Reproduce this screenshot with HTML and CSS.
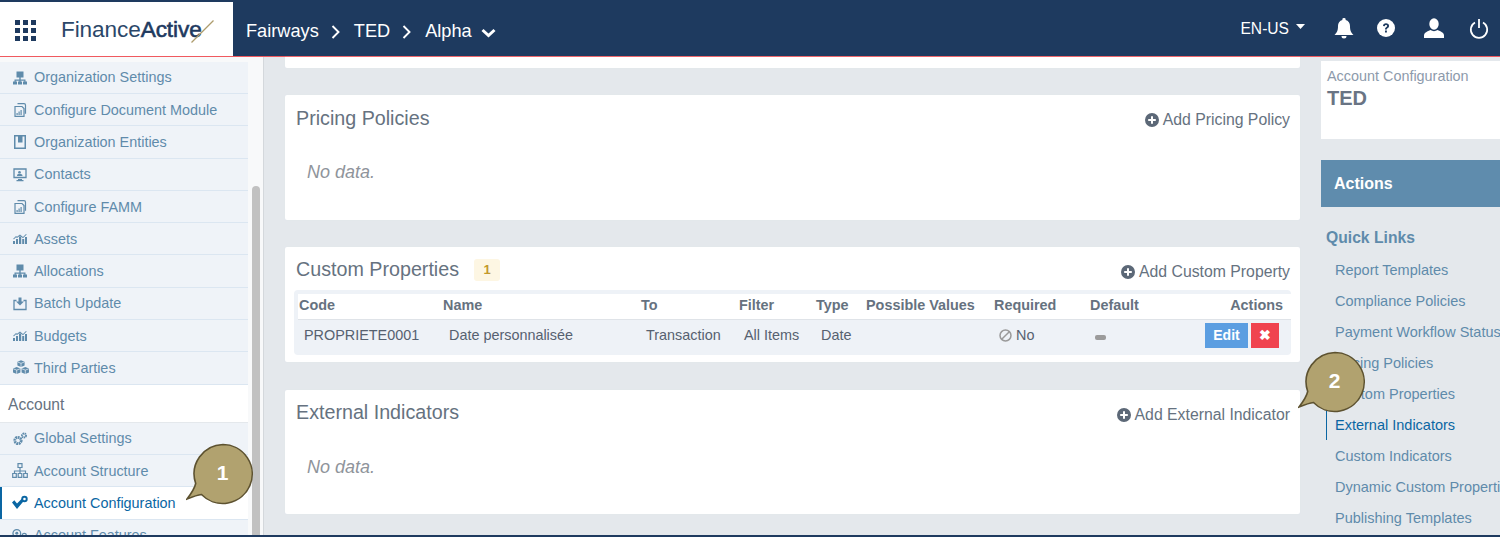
FILE: index.html
```html
<!DOCTYPE html>
<html lang="en">
<head>
<meta charset="utf-8">
<title>Account Configuration</title>
<link rel="stylesheet" href="styles.css">
</head>
<body>
<svg class="defs" width="0" height="0" aria-hidden="true">
  <symbol id="i-org" viewBox="0 0 14 13"><path d="M3.500 0h7v6h-7zM6.300 6h1.400v2h4.800v2h1.500v3H10v-3h1.300V9.200H7.700V10H9v3H5v-3h1.300v-.8H2.700V10H4v3H0v-3h1.500V8h4.800z" fill="currentColor"/></symbol>
  <symbol id="i-doc" viewBox="0 0 13 14"><path d="M4 .7h6.500a1.500 1.500 0 0 1 1.500 1.500v8.600M1.500 3.500h7l2 2v7.800h-9z" fill="none" stroke="currentColor" stroke-width="1.200"/><path d="M3 10h1.200v2H3zM5 8.500h1.200V12H5zM7 7h1.200v5H7z" fill="currentColor"/></symbol>
  <symbol id="i-book" viewBox="0 0 12 14"><path fill-rule="evenodd" d="M0 0h12v14H0zM1.500 1.500v11h9v-11H8.500v6H4v-6z" fill="currentColor"/></symbol>
  <symbol id="i-screen" viewBox="0 0 14 14"><path d="M1 1h12v8.500H1z" fill="none" stroke="currentColor" stroke-width="1.300"/><path d="M5 11h4v1h1.500v1.200h-7V12H5z" fill="currentColor"/><circle cx="6.500" cy="4.300" r="1.300" fill="currentColor"/><path d="M4 8c0-2 1-2.300 2.500-2.300S9.500 6 9.500 8z" fill="currentColor"/></symbol>
  <symbol id="i-chart" viewBox="0 0 14 10"><path d="M0 7h2v3H0zM3 5h2v5H3zM6 2.500h2.200V10H6zM9.200 5h2v5h-2zM12 3h2v7h-2zM0 5l3-3 1 .8 3-2.300 3 2.500 3-3 .7.600-3.700 3.700-3-2.500-3 2.300-1-.8-2 2z" fill="currentColor"/></symbol>
  <symbol id="i-batch" viewBox="0 0 14 13"><path d="M3.500 3H1v9h12V3h-2.500" fill="none" stroke="currentColor" stroke-width="1.300"/><path d="M5.500 0h3v4H11L7 8 3 4h2.500z" fill="currentColor"/></symbol>
  <symbol id="i-cubes" viewBox="0 0 18 15"><path d="M9 .3l3.600 1.400v3.900L9 7 5.400 5.600V1.700zM4.700 7l3.700 1.400v4.100l-3.700 1.500L1 12.500V8.400zM13.300 7L17 8.400v4.100L13.300 14l-3.700-1.500V8.400z" fill="currentColor"/><path d="M5.600 2L9 3.300 12.400 2M9 3.300V7M1.200 8.800l3.500 1.300 3.500-1.300M4.700 10.100V14M9.800 8.800l3.500 1.300 3.500-1.300M13.300 10.100V14" fill="none" stroke="#eff3f8" stroke-width=".7"/></symbol>
  <symbol id="i-gears" viewBox="0 0 14 13"><circle cx="5" cy="8" r="3.200" fill="none" stroke="currentColor" stroke-width="2.800" stroke-dasharray="1.800 .6"/><circle cx="11" cy="3" r="2" fill="none" stroke="currentColor" stroke-width="2" stroke-dasharray="1.300 .5"/></symbol>
  <symbol id="i-tree" viewBox="0 0 16 15"><path d="M8 4.500v3.500M2.500 10.500V8h11v2.500M8 8v2.500" fill="none" stroke="currentColor" stroke-width="1.200"/><path d="M6 .7h4v3.800H6zM.7 10.500h3.600v3.800H.7zM6.200 10.500h3.600v3.800H6.200zM11.700 10.500h3.600v3.800h-3.600z" fill="none" stroke="currentColor" stroke-width="1.200"/></symbol>
  <symbol id="i-config" viewBox="0 0 15 13"><path d="M0 6.500l2.200-2 2.500 3L11 1l1.800 2-8.100 9.500z" fill="currentColor"/><circle cx="11.700" cy="3.200" r="3" fill="currentColor"/><circle cx="11.700" cy="3.200" r="1.200" fill="#fff"/></symbol>
  <symbol id="i-feat" viewBox="0 0 15 13"><circle cx="4.500" cy="4.500" r="3.600" fill="none" stroke="currentColor" stroke-width="1.200"/><circle cx="4.500" cy="4.500" r="1.400" fill="currentColor"/><circle cx="11.500" cy="6.500" r="2" fill="none" stroke="currentColor" stroke-width="1.200"/><path d="M1 11h13" stroke="currentColor" stroke-width="1.200"/></symbol>
  <symbol id="i-plus" viewBox="0 0 14 14"><path fill-rule="evenodd" d="M7 0a7 7 0 1 1 0 14A7 7 0 0 1 7 0zM6 3.200V6H3.200v2H6v2.800h2V8h2.800V6H8V3.200z" fill="currentColor"/></symbol>
</svg>

<div class="page">
  <header class="topbar">
    <div class="brand">
      <svg class="apps" viewBox="0 0 21 21" aria-hidden="true"><path d="M0 0h5v5H0zM8 0h5v5H8zM16 0h5v5h-5zM0 8h5v5H0zM8 8h5v5H8zM16 8h5v5h-5zM0 16h5v5H0zM8 16h5v5H8zM16 16h5v5h-5z" fill="#1e3a5f"/></svg>
      <span class="logo">Finance<b>Active</b></span>
      <svg class="slash" viewBox="0 0 23 23" aria-hidden="true"><path d="M.5 22.500L22.500.5" stroke="#ad9c6c" stroke-width="1.300" fill="none"/></svg>
    </div>
    <nav class="crumbs">
      <span>Fairways</span>
      <svg class="chev" viewBox="0 0 10 14" aria-hidden="true"><path d="M1.500 1l6 6-6 6" fill="none" stroke="#fff" stroke-width="1.900"/></svg>
      <span>TED</span>
      <svg class="chev" viewBox="0 0 10 14" aria-hidden="true"><path d="M1.500 1l6 6-6 6" fill="none" stroke="#fff" stroke-width="1.900"/></svg>
      <span>Alpha</span>
      <svg class="down" viewBox="0 0 15 10" aria-hidden="true"><path d="M1.500 2l6 5.500 6-5.500" fill="none" stroke="#fff" stroke-width="3"/></svg>
    </nav>
    <div class="tools">
      <span class="lang">EN-US</span>
      <svg class="caret" viewBox="0 0 9 5" aria-hidden="true"><path d="M0 0h9L4.500 5z" fill="#fff"/></svg>
      <svg class="tool t-bell" viewBox="0 0 20 21" aria-hidden="true"><path d="M10 0a1.600 1.600 0 0 1 1.600 1.900C14.500 2.700 16 5 16 8c0 5 1.300 6.700 3.500 9h-19C2.700 14.700 4 13 4 8c0-3 1.500-5.300 4.400-6.100A1.600 1.600 0 0 1 10 0zM7.500 18h5a2.500 2.500 0 0 1-5 0z" fill="#fff"/></svg>
      <svg class="tool t-help" viewBox="0 0 18 18" aria-hidden="true"><circle cx="9" cy="9" r="9" fill="#fff"/><path d="M6 7c0-1.700 1.300-2.700 3-2.700S12.100 5.300 12.100 7c0 2-2.300 2-2.300 3.500H8c0-2.400 2.100-2.400 2.100-3.500 0-.6-.5-1-1.100-1s-1.100.4-1.200 1.200z" fill="#1e3a5f"/><path d="M8 11.500h1.900v1.900H8z" fill="#1e3a5f"/></svg>
      <svg class="tool t-user" viewBox="0 0 20 20" aria-hidden="true"><ellipse cx="10" cy="6" rx="4.700" ry="5.700" fill="#fff"/><path d="M0 17.500c0-3 3.500-4 6.500-5.500 2 1.500 5 1.500 7 0 3 1.500 6.500 2.500 6.500 5.500V20H0z" fill="#fff"/></svg>
      <svg class="tool t-power" viewBox="0 0 20 21" aria-hidden="true"><path d="M6 4.500a8.200 8.200 0 1 0 8 0" fill="none" stroke="#fff" stroke-width="1.700"/><path d="M10 1v9" stroke="#fff" stroke-width="1.800"/></svg>
    </div>
  </header>

  <div class="body">
    <aside class="side">
      <ul class="menu">
        <li><svg class="mi"><use href="#i-org"/></svg>Organization Settings</li>
        <li><svg class="mi"><use href="#i-doc"/></svg>Configure Document Module</li>
        <li><svg class="mi"><use href="#i-book"/></svg>Organization Entities</li>
        <li><svg class="mi"><use href="#i-screen"/></svg>Contacts</li>
        <li><svg class="mi"><use href="#i-doc"/></svg>Configure FAMM</li>
        <li><svg class="mi"><use href="#i-chart"/></svg>Assets</li>
        <li><svg class="mi"><use href="#i-org"/></svg>Allocations</li>
        <li><svg class="mi"><use href="#i-batch"/></svg>Batch Update</li>
        <li><svg class="mi"><use href="#i-chart"/></svg>Budgets</li>
        <li><svg class="mi cubes"><use href="#i-cubes"/></svg>Third Parties</li>
        <li class="group">Account</li>
        <li><svg class="mi"><use href="#i-gears"/></svg>Global Settings</li>
        <li><svg class="mi tree"><use href="#i-tree"/></svg>Account Structure</li>
        <li class="active"><svg class="mi tree"><use href="#i-config"/></svg>Account Configuration</li>
        <li><svg class="mi tree"><use href="#i-feat"/></svg>Account Features</li>
      </ul>
      <div class="scroll"><div class="thumb"></div></div>
    </aside>

    <main class="content">
      <section class="panel stub"></section>

      <section class="panel empty">
        <div class="panel-head">
          <h2>Pricing Policies</h2>
          <a class="add"><svg class="plus"><use href="#i-plus"/></svg>Add Pricing Policy</a>
        </div>
        <p class="nodata">No data.</p>
      </section>

      <section class="panel props">
        <div class="panel-head">
          <h2>Custom Properties</h2><span class="count">1</span>
          <a class="add"><svg class="plus"><use href="#i-plus"/></svg>Add Custom Property</a>
        </div>
        <div class="table-wrap">
          <table>
            <colgroup>
              <col class="c1"><col class="c2"><col class="c3"><col class="c4"><col class="c5"><col class="c6"><col class="c7"><col class="c8"><col>
            </colgroup>
            <thead>
              <tr><th>Code</th><th>Name</th><th>To</th><th>Filter</th><th>Type</th><th>Possible Values</th><th>Required</th><th>Default</th><th class="right">Actions</th></tr>
            </thead>
            <tbody>
              <tr>
                <td>PROPRIETE0001</td><td>Date personnalisée</td><td>Transaction</td><td>All Items</td><td>Date</td><td></td>
                <td><svg class="ban" viewBox="0 0 13 13" aria-hidden="true"><circle cx="6.500" cy="6.500" r="5.500" fill="none" stroke="#9a9a9a" stroke-width="1.500"/><path d="M2.700 10.300l7.600-7.600" stroke="#9a9a9a" stroke-width="1.500"/></svg>No</td>
                <td><span class="dash"></span></td>
                <td class="right acts"><span class="btn edit">Edit</span><span class="btn del">✖</span></td>
              </tr>
            </tbody>
          </table>
        </div>
      </section>

      <section class="panel empty">
        <div class="panel-head">
          <h2>External Indicators</h2>
          <a class="add"><svg class="plus"><use href="#i-plus"/></svg>Add External Indicator</a>
        </div>
        <p class="nodata">No data.</p>
      </section>
    </main>

    <aside class="rail">
      <div class="acct">
        <div class="acct-label">Account Configuration</div>
        <div class="acct-name">TED</div>
      </div>
      <div class="actions">Actions</div>
      <div class="quick">Quick Links</div>
      <ul class="links">
        <li>Report Templates</li>
        <li>Compliance Policies</li>
        <li>Payment Workflow Status</li>
        <li>Pricing Policies</li>
        <li>Custom Properties</li>
        <li class="current">External Indicators</li>
        <li>Custom Indicators</li>
        <li>Dynamic Custom Properties</li>
        <li>Publishing Templates</li>
      </ul>
    </aside>
  </div>

  <div class="callout one">
    <svg viewBox="0 0 70 66" aria-hidden="true"><path d="M37 1.500a29.500 29.500 0 1 1-21.500 50C11 52 6 54 1 56c3.500-4.500 7.500-10 8.700-15.500A29.500 29.500 0 0 1 37 1.500z" fill="#b1a26f" stroke="#5d5230" stroke-width="1.600"/></svg>
    <span>1</span>
  </div>
  <div class="callout two">
    <svg viewBox="0 0 70 66" aria-hidden="true"><path d="M37 1.500a29.500 29.500 0 1 1-21.500 50C11 52 6 54 1 56c3.500-4.500 7.500-10 8.700-15.500A29.500 29.500 0 0 1 37 1.500z" fill="#b1a26f" stroke="#5d5230" stroke-width="1.600"/></svg>
    <span>2</span>
  </div>
</div>
</body>
</html>
```

FILE: styles.css
```css
* { box-sizing: border-box; }
html, body { margin: 0; padding: 0; }
body {
  font-family: "Liberation Sans", Arial, sans-serif;
  color: #667280;
  background: #e4e8ec;
  overflow: hidden;
}
ul { list-style: none; margin: 0; padding: 0; }
.defs { display: block; height: 0; }

.page {
  position: relative;
  width: 1500px;
  height: 537px;
  display: flex;
  flex-direction: column;
  overflow: hidden;
  border-top: 2px solid #1e3a5f;
  border-bottom: 2px solid #1e3a5f;
}

.topbar {
  flex: none;
  height: 55px;
  display: flex;
  align-items: center;
  background: #1e3a5f;
  border-bottom: 1px solid #f0595f;
  color: #fff;
}
.brand {
  width: 233px;
  height: 100%;
  flex: none;
  display: flex;
  align-items: center;
  background: #fff;
  padding: 2px 0 0 15px;
}
.apps { width: 21px; height: 21px; flex: none; margin-right: 25px; }
.logo { font-size: 22.600px; color: #2b4769; letter-spacing: -.1px; }
.logo b { font-weight: 400; color: #1e3a5f; -webkit-text-stroke: .6px #1e3a5f; }
.slash { width: 23px; height: 23px; flex: none; margin: 3px 0 0 -11px; }

.crumbs { display: flex; align-items: center; font-size: 18.200px; padding: 4px 0 0 13px; }
.chev { width: 10px; height: 14px; margin: 1px 13px 0 12px; }
.down { width: 15px; height: 10px; margin: 3px 0 0 9px; }

.tools { margin-left: auto; display: flex; align-items: center; height: 100%; padding-bottom: 2px; }
.lang { font-size: 15.600px; margin-top: 1px; }
.caret { width: 9px; height: 5px; margin: -4px 0 0 7px; }
.tool { flex: none; }
.t-bell { width: 20px; height: 21px; margin-left: 29px; }
.t-help { width: 18px; height: 18px; margin-left: 23px; }
.t-user { width: 20px; height: 20px; margin-left: 29px; }
.t-power { width: 20px; height: 21px; margin: 0 11px 0 25px; }

.body { flex: 1; min-height: 0; display: flex; }

.side {
  width: 264px;
  flex: none;
  display: flex;
  background: #f8f9fa;
  border-right: 1px solid #d4d8dc;
  padding-top: 4.700px;
  overflow: hidden;
}
.menu { width: 248px; flex: none; }
.menu li {
  height: 32.300px;
  display: flex;
  align-items: center;
  background: #eff3f8;
  border-bottom: 1px solid #dbe6f1;
  color: #5f8bab;
  font-size: 14.400px;
  padding-left: 34px;
  position: relative;
  white-space: nowrap;
}
.mi { position: absolute; left: 13px; top: 9px; width: 14px; height: 14px; }
.mi.tree { left: 12px; top: 8px; width: 16px; height: 15px; }
.mi.cubes { left: 12px; top: 8px; width: 18px; height: 15px; }
.menu .group {
  height: 38px;
  background: #fff;
  color: #667280;
  font-size: 15.600px;
  padding: 3px 0 0 8px;
  border-bottom: 1px solid #e4e8ec;
}
.menu .active {
  background: #fff;
  color: #0a66a3;
  box-shadow: inset 2px 0 0 #0a66a3;
}
.scroll { width: 16px; padding: 124px 4px 0; flex: none; }
.thumb { width: 8px; height: 400px; background: #c1c1c1; border-radius: 4px 4px 0 0; }

.content { width: 1036px; flex: none; padding-left: 21px; display: flex; flex-direction: column; gap: 27.500px; }
.panel { background: #fff; width: 1015px; flex: none; border-radius: 2px; box-shadow: 0 0 1px #dbe3ec; }
.stub { height: 10.500px; border-radius: 0 0 2px 2px; }
.empty { height: 124.500px; }
.props { height: 115px; }
.panel-head { display: flex; align-items: center; padding: 5px 10px 0 11px; height: 41px; }
.panel-head h2 { margin: 0; font-size: 19.700px; font-weight: 400; color: #667280; }
.add { margin-left: auto; display: flex; align-items: center; font-size: 15.800px; color: #667280; padding-top: 4px; }
.plus { width: 14px; height: 14px; margin-right: 4px; color: #5c6877; }
.nodata { margin: 26px 0 0 22px; font-size: 18px; font-style: italic; color: #8f949b; }

.count {
  margin-left: 15px;
  width: 26px;
  height: 22px;
  display: flex;
  align-items: center;
  justify-content: center;
  background: #fdf6e3;
  border-radius: 3px;
  color: #c2992d;
  font-size: 13px;
  font-weight: 700;
}
.props .panel-head { padding-top: 2px; height: 43px; }

.table-wrap {
  margin-left: 9px;
  width: 997px;
  height: 65px;
  background: #eef2f7;
  border-radius: 4px;
  padding: 4px 0 0 4px;
}
table { width: 993px; border-collapse: collapse; table-layout: fixed; }
.c1 { width: 144px; } .c2 { width: 198px; } .c3 { width: 98px; } .c4 { width: 77px; }
.c5 { width: 50px; } .c6 { width: 128px; } .c7 { width: 96px; } .c8 { width: 90px; }
th {
  height: 25px;
  background: #fff;
  border-bottom: 1px solid #dfe3e8;
  text-align: left;
  font-size: 14.400px;
  font-weight: 700;
  color: #667280;
  padding: 0 0 2px 1px;
  white-space: nowrap;
}
td {
  height: 31px;
  font-size: 14.400px;
  color: #566170;
  padding: 1px 0 0 6px;
  white-space: nowrap;
}
td:nth-child(2) { padding-left: 7px; }
th.right { text-align: right; padding: 0 8px 2px 0; }
td.right { text-align: right; padding: 1px 4px 0 0; }
td.acts { padding-right: 12px; }
.ban { width: 13px; height: 13px; margin-right: 4px; vertical-align: -2px; }
.dash { display: inline-block; width: 11px; height: 5px; background: #9b9b9b; border-radius: 2px; vertical-align: 0; }
.btn {
  display: inline-block;
  height: 25px;
  line-height: 25px;
  text-align: center;
  color: #fff;
  font-weight: 700;
  font-size: 14px;
  vertical-align: middle;
}
.edit { width: 43px; background: #5b9ee1; }
.del { width: 28px; margin-left: 3px; background: #f0434f; font-size: 14px; }

.rail { flex: 1; padding-left: 21px; overflow: hidden; min-width: 0; }
.acct { height: 78px; margin-top: 4px; background: #fff; padding: 7px 0 0 6px; }
.acct-label { font-size: 14.400px; color: #8d9aab; }
.acct-name { font-size: 20px; font-weight: 700; color: #697484; margin-top: 3px; }
.actions {
  margin-top: 21px;
  height: 47px;
  background: #5f8cad;
  color: #fff;
  font-weight: 700;
  font-size: 16px;
  display: flex;
  align-items: center;
  padding-left: 13px;
}
.quick { margin: 22px 0 0 5px; font-size: 15.700px; font-weight: 700; color: #5f8bab; }
.links { margin-top: 7px; }
.links li {
  height: 31px;
  display: flex;
  align-items: center;
  padding-left: 14px;
  font-size: 14.500px;
  color: #5f8bab;
  white-space: nowrap;
}
.links .current { color: #0a66a3; box-shadow: inset 1px 0 0 #0a66a3; margin-left: 5px; padding-left: 9px; }

.callout { position: absolute; width: 70px; height: 66px; }
.callout svg { position: absolute; inset: 0; width: 70px; height: 66px; }
.callout span {
  position: absolute;
  left: 3px;
  right: 0;
  top: 18px;
  text-align: center;
  color: #fff;
  font-size: 21px;
  font-weight: 700;
}
.one { left: 186px; top: 441px; }
.two { left: 1298px; top: 349px; }
```
